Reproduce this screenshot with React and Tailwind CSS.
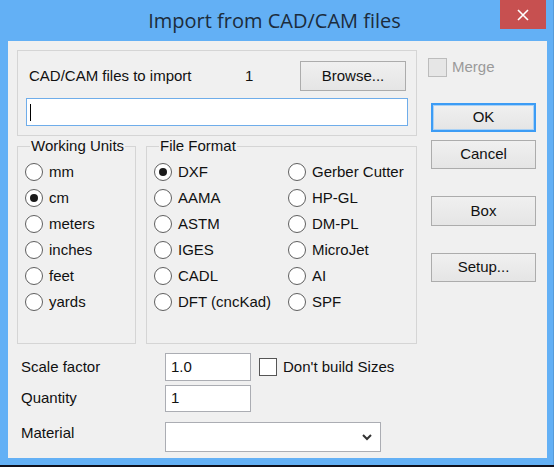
import React from "react";

const font = { fontFamily: '"Liberation Sans", Arial, sans-serif' };

function Radio({ label, checked }) {
  return (
    <div className="flex h-[26px] items-center">
      <span className="flex h-[18px] w-[18px] items-center justify-center rounded-full border border-[#5f5f5f] bg-white">
        {checked && <span className="h-[8px] w-[8px] rounded-full bg-[#1a1a1a]" />}
      </span>
      <span className="ml-[6px]">{label}</span>
    </div>
  );
}

function Group({ title, className, children }) {
  return (
    <div className={"relative h-[198px] border border-[#d5d5d5] " + className}>
      <span className="absolute left-[12px] top-[-10px] bg-[#f0f0f0] px-[1px] leading-[17px]">{title}</span>
      <div className="pt-[12px]">{children}</div>
    </div>
  );
}

function Button({ children, primary, className = "" }) {
  return (
    <div
      className={
        "flex h-[29px] w-[105px] items-center justify-center bg-gradient-to-b from-[#f0f0f0] to-[#e5e5e5] " +
        (primary ? "border-2 border-[#3c9cf5] shadow-[inset_0_0_0_1px_#a9d1f5] " : "border border-[#acacac] ") +
        className
      }
    >
      {children}
    </div>
  );
}

export default function App() {
  return (
    <div className="h-[467px] w-[554px] bg-[#10101c] text-[15px] text-[#111]" style={font}>
      <div className="flex h-[465px] w-[554px] flex-col border-r border-[#569bd9] bg-[#63b0f5]">
        {/* title bar */}
        <div className="relative flex h-[41px] items-start justify-center">
          <span
            className="mt-[7px] pr-[4px] text-[20px] leading-[28px] text-[#1c2c3c]"
            style={{ fontFamily: '"Open Sans", "Noto Sans", sans-serif' }}
          >
            Import from CAD/CAM files
          </span>
          <div className="absolute right-[7px] top-0 flex h-[29px] w-[46px] items-center justify-center bg-[#c75050]">
            <svg width="12" height="12" viewBox="0 0 12 12">
              <path d="M1 1 L11 11 M11 1 L1 11" stroke="white" strokeWidth="1.6" fill="none" />
            </svg>
          </div>
        </div>

        {/* client area */}
        <div className="ml-[8px] mr-[6px] flex h-[417px] bg-[#f0f0f0] pl-[9px]">
          {/* left column */}
          <div className="flex w-[400px] flex-col pt-[9px]">
            <div className="h-[86px] border border-[#d5d5d5]">
              <div className="mt-[10px] flex items-center">
                <span className="ml-[11px] w-[216px]">CAD/CAM files to import</span>
                <span>1</span>
                <Button className="ml-auto mr-[10px] h-[30px] w-[106px]">Browse...</Button>
              </div>
              <div className="ml-[8px] mt-[7px] flex h-[28px] w-[382px] items-center border border-[#6fadea] bg-white pl-[3px]">
                <span className="h-[17px] w-[1px] bg-black" />
              </div>
            </div>

            <div className="mt-[10px] flex gap-[10px]">
              <Group title="Working Units" className="w-[119px] pl-[7px]">
                <Radio label="mm" />
                <Radio label="cm" checked />
                <Radio label="meters" />
                <Radio label="inches" />
                <Radio label="feet" />
                <Radio label="yards" />
              </Group>
              <Group title="File Format" className="w-[271px] pl-[7px]">
                <div className="flex">
                  <div className="w-[134px]">
                    <Radio label="DXF" checked />
                    <Radio label="AAMA" />
                    <Radio label="ASTM" />
                    <Radio label="IGES" />
                    <Radio label="CADL" />
                    <Radio label="DFT (cncKad)" />
                  </div>
                  <div>
                    <Radio label="Gerber Cutter" />
                    <Radio label="HP-GL" />
                    <Radio label="DM-PL" />
                    <Radio label="MicroJet" />
                    <Radio label="AI" />
                    <Radio label="SPF" />
                  </div>
                </div>
              </Group>
            </div>

            <div className="mt-[9px] flex h-[28px] items-center">
              <span className="ml-[4px] w-[144px]">Scale factor</span>
              <div className="flex h-[28px] w-[86px] items-center border border-[#abadb3] bg-white pl-[5px]">1.0</div>
              <span className="ml-[8px] h-[18px] w-[18px] border border-[#555] bg-white" />
              <span className="ml-[6px]">Don't build Sizes</span>
            </div>
            <div className="mt-[4px] flex h-[27px] items-center">
              <span className="ml-[4px] w-[144px]">Quantity</span>
              <div className="flex h-[27px] w-[86px] items-center border border-[#abadb3] bg-white pl-[5px]">1</div>
            </div>
            <div className="mt-[10px] flex h-[30px] items-center">
              <span className="ml-[4px] w-[144px] self-start">Material</span>
              <div className="flex h-[30px] w-[216px] items-center justify-end border border-[#abadb3] bg-white pr-[8px]">
                <svg width="10" height="7" viewBox="0 0 10 7">
                  <path d="M1 1 L5 5 L9 1" stroke="#333" strokeWidth="2" fill="none" />
                </svg>
              </div>
            </div>
          </div>

          {/* right column */}
          <div className="ml-[11px] flex flex-col">
            <div className="mt-[17px] flex h-[19px] items-center">
              <span className="h-[19px] w-[19px] border border-[#bcbcbc] bg-[#e6e6e6]" />
              <span className="ml-[5px] text-[#9a9a9a]">Merge</span>
            </div>
            <div className="ml-[3px]">
              <Button primary className="mt-[26px]">OK</Button>
              <Button className="mt-[8px]">Cancel</Button>
              <Button className="mt-[27px] h-[30px]">Box</Button>
              <Button className="mt-[27px]">Setup...</Button>
            </div>
          </div>
        </div>
      </div>
    </div>
  );
}
